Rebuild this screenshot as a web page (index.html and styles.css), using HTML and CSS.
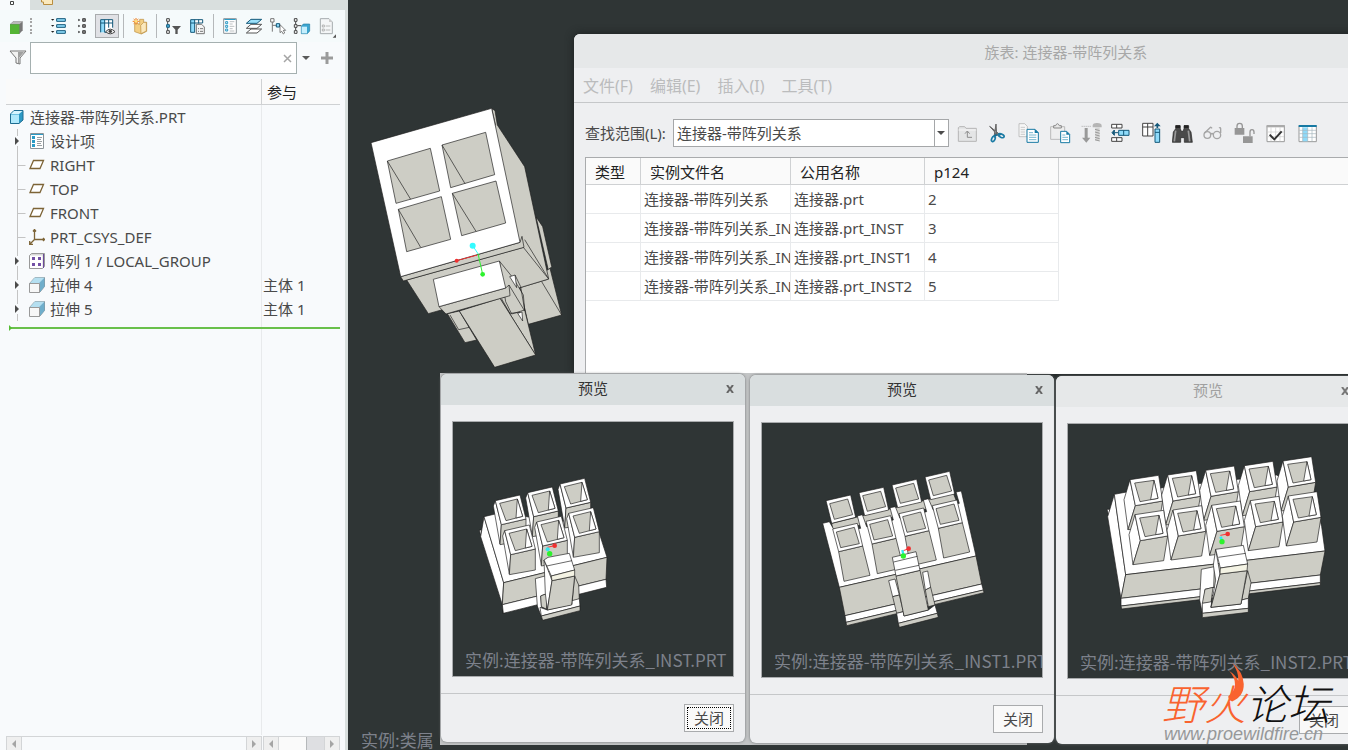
FILE: index.html
```html
<!doctype html>
<html lang="zh-CN">
  <head>
    <meta charset="UTF-8" />
    <meta name="viewport" content="width=device-width, initial-scale=1.0" />
    <title>族表: 连接器-带阵列关系</title>
    <link rel="stylesheet" href="styles.css">
  </head>
  <body>
    <svg class="defs" aria-hidden="true">
      <defs>
        <symbol id="twig-arrow" viewBox="0 0 21 24">
          <path d="M9.500 0v7M9.500 17v7" stroke="#c4c4c4" />
          <path d="M7 8l4 4-4 4z" fill="#4c4c4c" />
        </symbol>
        <symbol id="twig-branch" viewBox="0 0 21 24">
          <path d="M9.500 0v24M9.500 12.500h8" stroke="#c4c4c4" fill="none" />
        </symbol>
        <symbol id="icon-plane" viewBox="0 0 16 16">
          <path d="M4.500 3.500h10l-3.500 8h-10z" fill="#fff" stroke="#7d6437" stroke-width="1.300" />
        </symbol>
        <symbol id="icon-extrude" viewBox="0 0 16 16">
          <path d="M.5 6.500L6 .5h9.500v9l-5 6z" fill="#8ec5de" stroke="#8a9297" />
          <path d="M6 .5L1 6h9l5.500-5.500z" fill="#b5dff0" />
          <path d="M10.500 6v9.500l5-6V1z" fill="#6faecb" />
          <path d="M.5 6.500h10v9H.5z" fill="#f7f7f7" stroke="#999" />
        </symbol>
        <symbol id="icon-items" viewBox="0 0 16 16">
          <path d="M1.500.5h13v15h-13z" fill="#fff" stroke="#8c9499" />
          <path d="M2 1h12v1H2z" fill="#2b9bc6" />
          <path d="M3 3h3v3H3zM3 7h3v3H3zM3 11h3v3H3z" fill="#2b9bc6" />
          <path d="M8 4.500h5M8 6.500h4M8 8.500h5M8 10.500h4M8 12.500h5" stroke="#9ba0a3" />
        </symbol>
        <g id="tower-3">
          <path class="white" d="M0 0L-6 16 14 130 18 72z" />
          <path class="face" d="M18 72L92 55V118L14 132z" />
          <path class="white" d="M0 0L74-17 92 55 18 72z" />
          <path class="face" d="M13 8L66-5 82 47 32 60z" />
          <path class="white" d="M66-5L82 47 62 52z" />
        </g>
        <g id="tower-4">
          <path class="face" d="M18 68L90 51 112 139 34 157z" />
          <path class="white" d="M0 0L74-17 90 51 18 68z" />
          <path class="face" d="M11 9L65-5 80 44 24 56z" />
        </g>
        <g id="tower-5">
          <path class="white" d="M0 0L-18 60-6 150 16 78z" />
          <path class="face" d="M16 78L98 64 86 138-6 150z" />
          <path class="white" d="M0 0L86-13 98 64 16 78z" />
          <path class="face" d="M14 10L72 2 84 56 30 66z" />
          <path class="white" d="M72 2L84 56 62 60z" />
        </g>
      </defs>
    </svg>

    <div class="app">
      <aside class="sidebar">
        <div class="tabs">
          <button class="tab active" aria-label="模型树">
            <svg viewBox="0 0 30 10" width="30" height="10"><path d="M10.500 1.500h3v3h-3z" fill="#fff" stroke="#444" /></svg>
          </button>
          <button class="tab" aria-label="文件夹">
            <svg viewBox="0 0 30 10" width="30" height="10"><path d="M11.500 0v2h2v2.500h9V0" fill="#fbe9bd" stroke="#b98d3e" /></svg>
          </button>
        </div>

        <div class="tree-toolbar">
          <button class="tool" aria-label="模型">
            <svg viewBox="12 42 72 72"><path d="M30 73l10-9h28v27l-10 11H30z" fill="#777" /><path d="M31 72l10-8h27l-9 8z" fill="#b9b9b9" /><path d="M30 73h28v29H30z" fill="#54b435" /></svg>
          </button>
          <span class="grip"></span>
          <button class="tool" aria-label="全部展开">
            <svg viewBox="144 42 72 72"><path d="M173 56h26v8h-26zM173 74h26v8h-26zM173 92h26v8h-26z" fill="#8fdbfa" stroke="#14587a" stroke-width="3" /><path d="M156 57h10l-5 5zM156 75h10l-5 5zM156 93h10l-5 5z" fill="#222" /></svg>
          </button>
          <button class="tool" aria-label="全部折叠">
            <svg viewBox="213 42 72 72"><path d="M248 56h8v8h-8zM248 74h8v8h-8zM248 92h8v8h-8z" fill="#888" stroke="#444" stroke-width="3" /><path d="M235 56l6 4-6 4zM235 74l6 4-6 4zM235 92l6 4-6 4z" fill="#222" /></svg>
          </button>
          <button class="tool pressed" aria-label="树列">
            <svg viewBox="285 42 72 72"><path d="M302 59h36v38h-36z" fill="#fff" /><path d="M302 59h12v38h-12z" fill="#8fdbfa" /><path d="M302 97V59h36v24M302 69h36M314 59v38h10M326 59v24" fill="none" stroke="#14587a" stroke-width="3" /><path d="M317 95q14-15 28 0q-14 13-28 0z" fill="#eee" stroke="#444" stroke-width="3" /><circle cx="331" cy="94" r="5" fill="#444" /></svg>
          </button>
          <span class="sep"></span>
          <button class="tool" aria-label="显示">
            <svg viewBox="382 42 72 72"><path d="M402 68l15 5V58h12v9h9v27l-16 8-20-7z" fill="#f3cf83" stroke="#b98d3e" stroke-width="2" /><path d="M420 76l9-9h8v26l-16 8z" fill="#fbe9bd" stroke="#b98d3e" stroke-width="2" /><path d="M406 54v20M396 64h20M399 57l14 14M413 57l-14 14" stroke="#f07d1a" stroke-width="3" /><circle cx="406" cy="64" r="4" fill="#ffe680" /></svg>
          </button>
          <span class="sep"></span>
          <button class="tool" aria-label="过滤">
            <svg viewBox="483 42 72 72"><path d="M503 65v8M503 83v8" stroke="#444" stroke-width="3" /><path d="M500 56h8v8h-8zM500 92h8v8h-8z" fill="#fff" stroke="#444" stroke-width="3" /><path d="M500 74h8v8h-8z" fill="#4ab5e0" stroke="#14587a" stroke-width="3" /><path d="M516 78h27l-10 11v13h-7V89z" fill="#555" /></svg>
          </button>
          <button class="tool" aria-label="列设置">
            <svg viewBox="555 42 72 72"><path d="M572 59h36v38h-36z" fill="#fff" /><path d="M572 59h12v38h-12z" fill="#8fdbfa" /><path d="M572 97V59h36v10M572 69h36M584 59v38M596 59v12M572 97h12" fill="none" stroke="#14587a" stroke-width="3" /><path d="M589 73h16l8 8v20h-24z" fill="#f5f5f5" stroke="#777" stroke-width="3" /><path d="M594 86h3M600 86h9M594 94h3M600 94h9" stroke="#777" stroke-width="3" /></svg>
          </button>
          <span class="sep"></span>
          <button class="tool" aria-label="设计项">
            <svg viewBox="654 42 72 72"><path d="M671 56h38v44h-38z" fill="#fff" stroke="#8c9499" stroke-width="3" /><path d="M673 57h34v3h-34z" fill="#2b9bc6" /><path d="M677 65h6v6h-6zM677 76h6v6h-6zM677 87h6v6h-6z" fill="#fff" stroke="#2b9bc6" stroke-width="3" /><path d="M689 65h14M689 72h9M689 79h14M689 86h9M689 93h14" stroke="#9ba0a3" stroke-width="2" /></svg>
          </button>
          <button class="tool" aria-label="层">
            <svg viewBox="726 42 72 72"><path d="M739 99l14-12h32l-14 12zM739 85l14-12h32l-14 12z" fill="#fff" stroke="#555" stroke-width="3" /><path d="M739 70l14-12h32l-14 12z" fill="#9be0fa" stroke="#14587a" stroke-width="3" /></svg>
          </button>
          <button class="tool" aria-label="选择">
            <svg viewBox="798 42 72 72"><path d="M817 66v29M817 76h14" stroke="#777" stroke-width="3" /><path d="M812 56h10v10h-10z" fill="#fff" stroke="#777" stroke-width="3" /><path d="M829 71h10v10h-10z" fill="#8fdbfa" stroke="#14587a" stroke-width="3" /><path d="M840 74v24l5-4 5 8 4-3-4-8h7z" fill="#fff" stroke="#444" stroke-width="2" /></svg>
          </button>
          <button class="tool" aria-label="零件">
            <svg viewBox="870 42 72 72"><path d="M887 65v8M887 83v8M892 77h12" stroke="#444" stroke-width="3" /><path d="M883 56h8v8h-8zM883 74h8v8h-8zM883 92h8v8h-8z" fill="#fff" stroke="#444" stroke-width="3" /><path d="M904 79l6-7h19v21l-7 8h-18z" fill="#3aa5d0" stroke="#277fa5" stroke-width="2" /><path d="M905 80h16v20h-16z" fill="#c5effd" /></svg>
          </button>
          <button class="tool" aria-label="报告">
            <svg viewBox="945 42 72 72"><path d="M964 56h26l10 10v35h-36z" fill="#f4f6f7" stroke="#a5abae" stroke-width="3" /><path d="M990 56v10h10z" fill="#ccc" /><path d="M970 75h6v6h-6zM970 87h6v6h-6z" fill="none" stroke="#9a9a9a" stroke-width="2" /><path d="M980 78h14M980 90h14" stroke="#9a9a9a" stroke-width="2" /><path d="M1011 103v10h-10z" fill="#555" /></svg>
          </button>
        </div>

        <div class="search-row">
          <svg class="funnel" viewBox="0 0 18 18"><path d="M1 2h16l-6 7v6l-4-1V9z" fill="#f2f2f2" stroke="#777" /><path d="M9 3h6l-5 6v5H9z" fill="#a0a0a0" /></svg>
          <div class="search-box">
            <input type="text" aria-label="搜索">
            <button aria-label="清除"><svg viewBox="0 0 9 9" width="9" height="9"><path d="M1 1l7 7M8 1L1 8" stroke="#a5a5a5" stroke-width="1.500" /></svg></button>
          </div>
          <button class="plain" aria-label="选项"><svg viewBox="0 0 8 5" width="8" height="5"><path d="M0 0h8L4 4z" fill="#5a5a5a" /></svg></button>
          <button class="plain add" aria-label="添加"><svg viewBox="0 0 12 12" width="12" height="12"><path d="M6 0v12M0 6h12" stroke="#9b9b9b" stroke-width="3" /></svg></button>
        </div>

        <div class="tree">
          <table>
            <thead>
              <tr><th></th><th>参与</th></tr>
            </thead>
            <tbody>
              <tr>
                <td><div class="node root">
                  <svg class="icon" viewBox="0 0 16 16"><path d="M1.500 5L5 1.500h9V11l-4 3.500H1.500z" fill="#2e9ac5" stroke="#1d6c91" /><path d="M2 5.500h8V14H2z" fill="#b0e9fc" /><path d="M2 5l3-3h8.500L10 5z" fill="#d6f5ff" /></svg>连接器-带阵列关系.PRT</div></td>
                <td></td>
              </tr>
              <tr>
                <td><div class="node"><svg class="twig"><use href="#twig-arrow" /></svg><svg class="icon"><use href="#icon-items" /></svg>设计项</div></td>
                <td></td>
              </tr>
              <tr>
                <td><div class="node"><svg class="twig"><use href="#twig-branch" /></svg><svg class="icon"><use href="#icon-plane" /></svg>RIGHT</div></td>
                <td></td>
              </tr>
              <tr>
                <td><div class="node"><svg class="twig"><use href="#twig-branch" /></svg><svg class="icon"><use href="#icon-plane" /></svg>TOP</div></td>
                <td></td>
              </tr>
              <tr>
                <td><div class="node"><svg class="twig"><use href="#twig-branch" /></svg><svg class="icon"><use href="#icon-plane" /></svg>FRONT</div></td>
                <td></td>
              </tr>
              <tr>
                <td><div class="node"><svg class="twig"><use href="#twig-branch" /></svg><svg class="icon" viewBox="0 0 16 16"><path d="M5.500 0v10.500H16M5.500 10.500L1 15M4 2.500L5.500.5 7 2.500M14 9l1.500 1.500L14 12M.7 12v3.300H4" fill="none" stroke="#7d6437" stroke-width="1.300" /></svg>PRT_CSYS_DEF</div></td>
                <td></td>
              </tr>
              <tr>
                <td><div class="node"><svg class="twig"><use href="#twig-arrow" /></svg><svg class="icon" viewBox="0 0 16 16"><path d="M.5 2.500l2-2h13v13l-2 2H.5z" fill="#d8d8d8" stroke="#999" /><path d="M1 2.500h12.500V15H1z" fill="#fff" /><path d="M14.500 1v14" stroke="#6c4a9b" /><path d="M3 4h3v3H3zM9 4h3v3H9zM3 10h3v3H3zM9 10h3v3H9z" fill="#7350a5" /></svg>阵列 1 / LOCAL_GROUP</div></td>
                <td></td>
              </tr>
              <tr>
                <td><div class="node"><svg class="twig"><use href="#twig-arrow" /></svg><svg class="icon"><use href="#icon-extrude" /></svg>拉伸 4</div></td>
                <td>主体 1</td>
              </tr>
              <tr>
                <td><div class="node"><svg class="twig"><use href="#twig-arrow" /></svg><svg class="icon"><use href="#icon-extrude" /></svg>拉伸 5</div></td>
                <td>主体 1</td>
              </tr>
            </tbody>
          </table>
          <div class="insert-line"></div>
        </div>

        <div class="scrollbars">
          <div class="scrollbar wide">
            <button aria-label="向左"><svg viewBox="0 0 4 8"><path d="M4 0v8L0 4z" /></svg></button>
            <span class="track"></span>
            <button aria-label="向右"><svg viewBox="0 0 4 8"><path d="M0 0v8l4-4z" /></svg></button>
          </div>
          <div class="scrollbar narrow">
            <button aria-label="向左"><svg viewBox="0 0 4 8"><path d="M4 0v8L0 4z" /></svg></button>
            <span class="track"><span class="thumb"></span></span>
            <button aria-label="向右"><svg viewBox="0 0 4 8"><path d="M0 0v8l4-4z" /></svg></button>
          </div>
        </div>
      </aside>

      <main class="viewport">
        <svg class="model main-model" viewBox="0 0 660 855">
          <path class="face" d="M528 365L548 395 575 515 565 525z" />
          <path class="face" d="M480 578L570 520 605 660 505 688z" />
          <path class="edge" d="M545 560L605 660" />
          <path class="face" d="M395 40L405 47 412 90 494 215 566 552 480 578 450 450z" />
          <path class="edge" d="M395 40L407 92 M494 434L566 552" />
          <path class="face" d="M140 555L490 457 566 552 480 578 205 656z" />
          <path class="face" d="M122 545L480 442 486 424 492 457 130 558z" />
          <path class="white" d="M33 143L395 40 480 442 122 545z" />
          <path class="face" d="M82 198L211 160 239 288 108 325zM246 150L377 112 404 239 272 278zM115 343L244 305 272 433 140 470zM277 295L408 258 437 384 305 422z" />
          <path class="edge" d="M82 198L152 313M246 150L315 266M115 343L182 457M277 295L348 409" />
          <path class="face" d="M262 656L298 648 350 735 315 743z" />
          <path class="edge" d="M270 660L296 704 328 697" />
          <path class="face" d="M420 610L450 602 494 645 527 780z" />
          <path class="face" d="M298 648L420 610 527 780 404 817z" />
          <path class="face" d="M418 498L460 550 490 600 494 645 455 657 437 620z" />
          <path class="white" d="M449 545L465 540 470 578zM473 655L486 651 488 678z" />
          <path class="edge" d="M465 540L482 575 494 645M425 612L450 655 480 652M447 570L494 648" />
          <path class="face" d="M237 635L437 579 447 570 450 602 258 657z" />
          <path class="white" d="M220 553L418 498 437 579 237 635z" />
          <path d="M290 497L352 480" stroke="#e33" stroke-width="3" />
          <path d="M338 452L354 476" stroke="#3ff" stroke-width="3" />
          <path d="M354 476L368 538" stroke="#3e3" stroke-width="3" />
          <circle cx="290" cy="497" r="6" fill="#f03030" />
          <circle cx="338" cy="452" r="9" fill="#33fbff" />
          <circle cx="368" cy="538" r="7" fill="#2df22d" />
        </svg>
        <span class="model-label">实例:类属</span>

        <section class="window family-table">
          <header class="window-title">族表: 连接器-带阵列关系</header>
          <nav class="menubar">
            <button disabled>文件(F)</button>
            <button disabled>编辑(E)</button>
            <button disabled>插入(I)</button>
            <button disabled>工具(T)</button>
          </nav>
          <div class="lookup">
            <label for="look-in">查找范围(L):</label>
            <div class="combo">
              <select id="look-in"><option>连接器-带阵列关系</option></select>
            </div>
            <div class="lookup-tools">
              <button aria-label="上一级"><svg viewBox="22 63 72 72"><path d="M32 124V83l4-3h15l4 5h31v39z" fill="#e4e5e6" stroke="#b5b5b5" stroke-width="3" /><path d="M32 90h54" stroke="#fff" stroke-width="2" /><path d="M59 94v18h14M52 101l7-8 7 8" fill="none" stroke="#8d8d8d" stroke-width="3" /></svg></button>
              <button aria-label="剪切"><svg viewBox="112 63 72 72"><path d="M123 79l26 29 5-4zM142 72l2 33-8 6z" fill="#777" stroke="#666" stroke-width="3" /><path d="M144 104l-9 6M147 105l11-3" stroke="#176b91" stroke-width="6" /><ellipse cx="134" cy="117" rx="5" ry="8" transform="rotate(25 134 117)" fill="none" stroke="#1b7ba5" stroke-width="5" /><ellipse cx="158" cy="107" rx="9" ry="5" transform="rotate(25 158 107)" fill="none" stroke="#1b7ba5" stroke-width="5" /></svg></button>
              <button aria-label="复制"><svg viewBox="205 63 72 72"><path d="M211 71h17l8 8v31h-25z" fill="#f7f7f7" stroke="#ababab" stroke-width="2" /><path d="M216 82h13M216 89h13M216 96h13M216 103h13" stroke="#b5b5b5" stroke-width="2" /><path d="M235 88h24l10 10v29h-34z" fill="#fff" stroke="#1679a3" stroke-width="3" /><path d="M258 87v12h12z" fill="#1679a3" /><path d="M241 98h12M241 105h22M241 112h22M241 119h22" stroke="#3192b7" stroke-width="2" /></svg></button>
              <button aria-label="粘贴"><svg viewBox="300 63 72 72"><path d="M308 80h42v38h-42z" fill="#eee" stroke="#bbb" stroke-width="3" /><path d="M317 84v-7h6q5-12 11 0h6v7z" fill="#e8e8e8" stroke="#888" stroke-width="3" /><path d="M338 94h18l9 9v25h-27z" fill="#fff" stroke="#1679a3" stroke-width="3" /><path d="M355 93v11h11z" fill="#1679a3" /><path d="M343 105h9M343 112h17M343 119h17" stroke="#3192b7" stroke-width="2" /></svg></button>
              <button aria-label="排序"><svg viewBox="394 63 72 72"><path d="M402 79h30" stroke="#aaa" stroke-width="3" stroke-dasharray="3 3" /><path d="M411 84h9v29h8l-12 15-13-15h8z" fill="#999" /><path d="M435 76q2-8 14-7q13 0 13 8v5h-27z" fill="#b5b5b5" /><path d="M443 82h13v41h-13z" fill="#d5d5d5" /><path d="M442 88l14 4M442 96l14 4M442 104l14 4M442 112l14 4M442 119l14 4" stroke="#999" stroke-width="3" /></svg></button>
              <button aria-label="插入行"><svg viewBox="485 63 72 72"><path d="M490 73h31v11h-31zM505 73v11M490 113h31v11h-31zM505 113v11" fill="#fff" stroke="#444" stroke-width="3" /><path d="M511 91h31v15h-31zM526 91v15" fill="#8fdbfa" stroke="#14587a" stroke-width="3" /><path d="M509 98h-11v8l-7-8 7-8v8" fill="#14587a" stroke="#14587a" stroke-width="3" /></svg></button>
              <button aria-label="插入列"><svg viewBox="578 63 72 72"><path d="M583 70h31v38h-31zM598 70v38M583 81h31" fill="#fff" stroke="#444" stroke-width="3" /><path d="M620 87h14v40h-14zM620 97h14" fill="#8fdbfa" stroke="#14587a" stroke-width="3" /><path d="M627 84v-7" stroke="#14587a" stroke-width="5" /><path d="M617 79l10-11 10 11z" fill="#14587a" /></svg></button>
              <button aria-label="查找"><svg viewBox="671 63 72 72"><path d="M672 127l3-31 7-10v-9h14v9l3 8h5l3-8v-9h14v9l7 10 4 31h-24v-14h-11v14z" fill="#4a4a4a" stroke="#222" stroke-width="2" /><path d="M682 76h13v8h-13zM707 76h13v8h-13z" fill="#222" /><path d="M682 92l-4 32M720 92l4 32" stroke="#999" stroke-width="5" /></svg></button>
              <button aria-label="预览"><svg viewBox="764 63 72 72"><g fill="none" stroke="#a5a5a5" stroke-width="4"><circle cx="777" cy="105" r="10" /><circle cx="806" cy="105" r="11" /><path d="M787 103q4-5 8 0M768 100l17-17q3-3 6 2M817 99V86q-1-5-5-2" /></g></svg></button>
              <button aria-label="锁定"><svg viewBox="856 63 72 72"><path d="M858 84h29v20h-29zM883 109h29v20h-29z" fill="#969696" /><path d="M865 84v-6q0-8 8-8t8 8v6M904 109V97q0-8 6-8t6 8v5" fill="none" stroke="#969696" stroke-width="4" /></svg></button>
              <button aria-label="校验"><svg viewBox="949 63 72 72"><path d="M955 77h52v48h-52z" fill="#fff" stroke="#999" stroke-width="3" /><path d="M954 75h54v7h-54z" fill="#aaa" /><path d="M967 82v42M981 82v42M994 82v42M956 96h50M956 110h50" stroke="#ccc" stroke-width="2" /><path d="M963 104l14 14 22-24" fill="none" stroke="#333" stroke-width="6" /></svg></button>
              <button aria-label="编辑表"><svg viewBox="1042 63 72 72"><path d="M1051 77h52v48h-52z" fill="#fff" stroke="#999" stroke-width="3" /><path d="M1062 82h15v42h-15z" fill="#8fdbfa" /><path d="M1062 82v42M1077 82v42M1090 82v42M1052 91h50M1052 101h50M1052 112h50" stroke="#a5b5bd" stroke-width="2" /><path d="M1050 75h54v6h-54z" fill="#1679a3" /></svg></button>
            </div>
          </div>
          <div class="instances">
            <table>
              <colgroup><col class="c-type"><col class="c-file"><col class="c-name"><col class="c-value"><col></colgroup>
              <thead>
                <tr><th>类型</th><th>实例文件名</th><th>公用名称</th><th>p124</th><th></th></tr>
              </thead>
              <tbody>
                <tr><td></td><td>连接器-带阵列关系</td><td>连接器.prt</td><td>2</td></tr>
                <tr><td></td><td>连接器-带阵列关系_INST</td><td>连接器.prt_INST</td><td>3</td></tr>
                <tr><td></td><td>连接器-带阵列关系_INST1</td><td>连接器.prt_INST1</td><td>4</td></tr>
                <tr><td></td><td>连接器-带阵列关系_INST2</td><td>连接器.prt_INST2</td><td>5</td></tr>
              </tbody>
            </table>
          </div>
        </section>

        <div class="backdrop"></div>

        <section class="window preview preview-1">
          <header class="window-title">预览
            <button aria-label="关闭窗口"><svg viewBox="0 0 8 8"><path d="M1 0l6 8M7 0L1 8" stroke="#666" stroke-width="2" /></svg></button>
          </header>
          <div class="canvas">
            <svg class="model" viewBox="0 0 840 765">
              <g transform="translate(51 144)">
                <path class="white" d="M28 180L34 180 34 204z" />
                <path class="white" d="M42 140L32 200 97 404 100 432 97 404 101 338z" />
                <path class="white" d="M42 140L84 130 380 165 411 262 101 338z" />
                <path class="face" d="M101 338L411 262 408 328 97 404z" />
                <path class="white" d="M97 404L408 328 410 352 100 430z" />
                <use href="#tower-3" x="76" y="92" />
                <use href="#tower-3" x="173" y="68" />
                <use href="#tower-3" x="270" y="42" />
                <use href="#tower-3" x="104" y="182" />
                <use href="#tower-3" x="200" y="156" />
                <use href="#tower-3" x="296" y="130" />
                <path class="white" d="M196 326L232 316 232 370 212 378 218 450 202 408z" />
                <path class="face" d="M212 378L232 370 230 418 214 410z" />
                <path class="face" d="M314 318L326 345 328 390 306 402z" />
                <path class="white" d="M210 412L232 420 306 403 306 392 328 386 330 408 214 438z" />
                <path class="face" d="M214 438L330 408 330 422 218 451z" />
                <path class="white" d="M222 270L238 310 246 332 232 420 226 370z" />
                <path class="face" d="M246 332L314 318 305 405 232 420z" />
                <path class="white" d="M222 270L234 262 298 250 314 300 244 318z" />
                <path class="cream" d="M244 318L314 300V318L246 332z" />
                <path class="edge" d="M230 288L306 272" />
                <path d="M232 232L254 227" stroke="#f33" stroke-width="3" />
                <circle cx="233" cy="238" r="6" fill="#33e8ef" />
                <circle cx="254" cy="227" r="7" fill="#f03030" />
                <circle cx="239" cy="251" r="8" fill="#2df22d" />
              </g>
            </svg>
            <span class="caption">实例:连接器-带阵列关系_INST.PRT</span>
          </div>
          <footer><button class="btn focused">关闭</button></footer>
        </section>

        <section class="window preview preview-2">
          <header class="window-title">预览
            <button aria-label="关闭窗口"><svg viewBox="0 0 8 8"><path d="M1 0l6 8M7 0L1 8" stroke="#666" stroke-width="2" /></svg></button>
          </header>
          <div class="canvas">
            <svg class="model" viewBox="0 0 840 765">
              <g transform="translate(144 111)">
                <path class="face" d="M65 190L430 100 440 125 70 215z" />
                <path class="white" d="M38 190L58 185 78 220 152 205 142 168 157 164 170 200 250 180 240 143 256 140 270 175 350 155 340 120 355 116 370 150 448 130 438 96 454 93 498 288 88 382z" />
                <path class="face" d="M88 382L498 288 515 372 105 467z" />
                <path class="white" d="M105 467L515 372 520 390 108 487z" />
                <path class="face" d="M108 487L520 390 522 398 110 497z" />
                <use href="#tower-4" x="68" y="207" />
                <use href="#tower-4" x="168" y="184" />
                <use href="#tower-4" x="267" y="161" />
                <use href="#tower-4" x="367" y="137" />
                <path class="white" d="M48 122L122 105 137 172 65 190zM147 98L221 82 236 150 164 167zM246 75L320 58 335 126 263 143zM345 51L419 34 434 102 362 119z" />
                <path class="face" d="M59 131L113 117 128 164 73 178zM158 107L212 94 227 140 172 154zM257 84L311 70 326 117 271 130zM356 60L410 46 425 93 370 107z" />
                <path class="white" d="M236 362L255 357 268 405 248 410zM338 337L353 333 362 382 346 390z" />
                <path class="face" d="M248 410L268 405 280 455 260 460zM346 390L362 382 375 435 355 440z" />
                <path class="white" d="M260 460L280 455 282 468 355 450 375 435 382 460 265 490z" />
                <path class="face" d="M265 490L382 460 385 472 268 502z" />
                <path class="face" d="M258 348L330 331 355 450 282 468z" />
                <path class="white" d="M247 292L318 275 330 331 258 348z" />
                <path class="edge" d="M251 306L322 289M256 331L327 316" />
                <path d="M280 272L296 266" stroke="#f33" stroke-width="3" />
                <path d="M277 270L280 284" stroke="#33e8ef" stroke-width="7" />
                <circle cx="296" cy="266" r="7" fill="#f03030" />
                <circle cx="280" cy="288" r="8" fill="#2df22d" />
              </g>
            </svg>
            <span class="caption">实例:连接器-带阵列关系_INST1.PRT</span>
          </div>
          <footer><button class="btn">关闭</button></footer>
        </section>

        <section class="window preview preview-3">
          <header class="window-title">预览
            <button aria-label="关闭窗口"><svg viewBox="0 0 8 8"><path d="M1 0l6 8M7 0L1 8" stroke="#777" stroke-width="2" /></svg></button>
          </header>
          <div class="canvas">
            <svg class="model" viewBox="0 0 840 765">
              <g transform="translate(81 78)">
                <path class="white" d="M36 178L44 178 42 200z" />
                <path class="white" d="M58 133L38 200 78 447 92 374z" />
                <path class="white" d="M58 133L100 125 320 100 545 75 660 140 680 230 690 303 92 374z" />
                <path class="face" d="M92 374L690 303 676 375 78 445z" />
                <path class="white" d="M78 445L676 375V398L78 468z" />
                <path class="face" d="M78 468L676 398V406L80 477z" />
                <use href="#tower-5" x="105" y="89" />
                <use href="#tower-5" x="218" y="75" />
                <use href="#tower-5" x="332" y="61" />
                <use href="#tower-5" x="448" y="47" />
                <use href="#tower-5" x="564" y="33" />
                <use href="#tower-5" x="120" y="194" />
                <use href="#tower-5" x="234" y="180" />
                <use href="#tower-5" x="350" y="166" />
                <use href="#tower-5" x="466" y="152" />
                <use href="#tower-5" x="580" y="138" />
                <path class="white" d="M319 358L358 350 356 412 330 418 322 490 314 450z" />
                <path class="face" d="M330 418L354 412 348 458 322 460z" />
                <path class="face" d="M458 362L468 398 460 445 440 450z" />
                <path class="white" d="M322 460L350 455 348 472 438 462 440 450 460 445V475L322 490z" />
                <path class="face" d="M322 490L460 475V487L322 503z" />
                <path class="white" d="M362 298L355 345 362 390 348 472 375 372z" />
                <path class="face" d="M375 372L456 362 438 462 348 472z" />
                <path class="white" d="M362 298L445 286 458 342 376 354z" />
                <path class="cream" d="M376 354L458 342 456 362 375 372z" />
                <path class="edge" d="M370 322L452 310" />
                <path d="M376 256L398 252" stroke="#f33" stroke-width="3" />
                <path d="M377 260L381 274" stroke="#33e8ef" stroke-width="8" />
                <circle cx="398" cy="252" r="7" fill="#f03030" />
                <circle cx="381" cy="275" r="8" fill="#2df22d" />
              </g>
            </svg>
            <span class="caption">实例:连接器-带阵列关系_INST2.PRT</span>
          </div>
          <footer><button class="btn">关闭</button></footer>
        </section>

        <div class="watermark">
          <div class="brand"><span>野火</span>论坛</div>
          <svg class="flame" viewBox="0 0 60 130"><path d="M18 2q34 28 36 66q1 38-36 54q-12-4-12-16q20-16 21-34q1-24-18-44q20 12 28 30q2-28-19-56z" fill="#f9632f" /></svg>
          <div class="site">www.proewildfire.cn</div>
        </div>
      </main>
    </div>
  </body>
</html>
```

FILE: styles.css
```css
* {
  box-sizing: border-box;
}

body {
  margin: 0;
  font-family: "Noto Sans", "Noto Sans CJK SC", sans-serif;
  font-size: 15px;
  line-height: 24px;
  color: #4a4a4a;
}

button,
input,
select {
  font: inherit;
  color: inherit;
}

button {
  padding: 0;
  border: 0;
  background: none;
}

svg {
  display: block;
  flex: none;
}

.defs {
  position: absolute;
  width: 0;
  height: 0;
}

.app {
  display: flex;
  height: 100vh;
  overflow: hidden;
}

/* Model tree panel */
.sidebar {
  display: flex;
  flex-direction: column;
  flex: none;
  width: 348px;
  background-color: #f8fafc;
  border-right: 3px solid #d9dfde;
}

.tabs {
  display: flex;
  flex: none;
  height: 10px;
  background-color: #d9dfde;
}

.tab {
  width: 30px;
  height: 10px;
}

.tab.active {
  background-color: #f8fafc;
}

.tree-toolbar {
  display: flex;
  align-items: center;
  height: 32px;
  padding-left: 4px;
  background-color: #f5fafb;
}

.tool {
  width: 24px;
  height: 24px;
}

.tool svg {
  width: 24px;
  height: 24px;
}

.tool.pressed {
  background-color: #e0e1e5;
  outline: 1px solid #a9acae;
  outline-offset: -1px;
}

.grip {
  width: 19px;
  height: 16px;
}

.grip::before {
  content: "";
  display: block;
  height: 16px;
  margin-left: 2px;
  border-left: 2px dotted #a5a5a5;
}

.sep {
  width: 1px;
  height: 24px;
  margin: 0 4px;
  background-color: #b5b8ba;
}

.search-row {
  display: flex;
  align-items: center;
  height: 32px;
  padding-left: 9px;
}

.funnel {
  width: 18px;
  height: 18px;
  margin-right: 3px;
}

.search-box {
  display: flex;
  align-items: center;
  width: 267px;
  height: 32px;
  padding-right: 4px;
  background-color: #fff;
  border: 1px solid #a5b0b0;
}

.search-box input {
  flex: 1;
  min-width: 0;
  border: 0;
  outline: 0;
  background: none;
}

.plain {
  margin-left: 5px;
}

.plain.add {
  margin-left: 11px;
}

.tree {
  flex: 1;
  margin: 5px 5px 1px 6px;
  background: linear-gradient(#e8eaec, #e8eaec) 255px 0 / 1px 100% no-repeat;
}

.tree table {
  width: 100%;
  table-layout: fixed;
  border-collapse: separate;
  border-spacing: 0;
}

.tree th {
  height: 26px;
  padding: 1px 0 0 5px;
  font-weight: normal;
  text-align: left;
  color: #222;
  background-color: #fafafa;
  border-bottom: 1px solid #cfd1d3;
}

.tree th:first-child {
  width: 256px;
  border-right: 1px solid #cfd1d3;
}

.tree td {
  height: 24px;
  padding: 0 0 0 1px;
}

.node {
  display: flex;
  align-items: center;
  height: 24px;
  padding-left: 1px;
}

.node .icon {
  width: 16px;
  height: 16px;
  margin-right: 5px;
}

.node.root {
  padding-left: 2px;
}

.node .twig {
  width: 21px;
  height: 24px;
}

.insert-line {
  height: 2px;
  margin: 6px 0 0 3px;
  background-color: #69c04b;
  position: relative;
}

.insert-line::before {
  content: "";
  position: absolute;
  top: -2px;
  left: 0;
  border: 3px solid transparent;
  border-left-color: #55bd33;
}

.scrollbars {
  display: flex;
  flex: none;
  gap: 1px;
  height: 14px;
  padding: 0 5px 0 6px;
}

.scrollbar {
  display: flex;
  height: 14px;
  border: 1px solid #d3d5d7;
  border-bottom: 0;
}

.scrollbar.wide {
  width: 256px;
}

.scrollbar.narrow {
  flex: 1;
}

.scrollbar button {
  display: flex;
  align-items: center;
  justify-content: center;
  width: 14px;
  background-color: #efefef;
}

.scrollbar button svg {
  width: 4px;
  height: 8px;
  fill: #a5a5a5;
}

.track {
  flex: 1;
  border: solid #d3d5d7;
  border-width: 0 1px;
}

.narrow .track {
  background-color: #dedfe2;
}

.thumb {
  display: block;
  width: 28px;
  height: 14px;
  background-color: #fafafa;
  border-right: 1px solid #b5b8ba;
}

/* Graphics area */
.viewport {
  position: relative;
  flex: 1;
  min-width: 0;
  overflow: hidden;
  background-color: #2f3535;
}

.white,
.face,
.cream,
.edge {
  stroke: #1c1c1c;
  stroke-width: 2;
  stroke-linejoin: round;
}

.white {
  fill: #fff;
}

.face {
  fill: #cdcdc5;
}

.cream {
  fill: #f4f3e4;
}

.edge {
  fill: none;
}

.main-model {
  position: absolute;
  top: 95px;
  left: 12px;
  width: 220px;
  height: 285px;
}

.model-label,
.caption {
  position: absolute;
  font-family: "Noto Sans CJK SC", sans-serif;
  font-size: 17px;
  line-height: 20px;
  white-space: nowrap;
  color: #7d818b;
}

.model-label {
  left: 13px;
  bottom: 0;
}

/* Windows */
.window {
  position: absolute;
  background-color: #eeeff1;
  border-radius: 6px;
}

.window-title {
  position: relative;
  text-align: center;
}

.family-table {
  top: 34px;
  left: 226px;
  display: flex;
  flex-direction: column;
  width: 984px;
  height: 340px;
  border-radius: 6px 6px 0 0;
  box-shadow: 0 0 8px #1c1f1f;
}

.family-table .window-title {
  padding: 6px 0 4px;
  background-color: #e6e8e9;
  border-radius: 6px 6px 0 0;
  color: #a8a8a8;
}

.menubar {
  display: flex;
  gap: 17px;
  padding: 6px 9px 4px;
  border-bottom: 1px solid #c5c7c9;
}

.menubar button {
  font-size: 16px;
  color: #bbbcbd;
}

.lookup {
  display: flex;
  align-items: center;
  height: 54px;
  padding: 6px 11px 0;
}

.lookup label {
  width: 88px;
  white-space: nowrap;
}

.combo {
  position: relative;
  width: 276px;
  height: 28px;
}

.combo select {
  width: 100%;
  height: 100%;
  padding: 0 20px 0 3px;
  appearance: none;
  background-color: #fff;
  border: 1px solid #a5a7a9;
  border-radius: 0;
}

.combo::before {
  content: "";
  position: absolute;
  top: 1px;
  right: 14px;
  height: 26px;
  border-left: 1px solid #a5a7a9;
}

.combo::after {
  content: "";
  position: absolute;
  top: 12px;
  right: 4px;
  border: 4px solid transparent;
  border-top-color: #4c4c4c;
  border-bottom: 0;
}

.lookup-tools {
  display: flex;
  margin-left: 2px;
}

.lookup-tools button {
  display: flex;
  justify-content: center;
  width: 31px;
}

.lookup-tools svg {
  width: 24px;
  height: 24px;
}

.instances {
  flex: 1;
  margin: 0 11px;
  background-color: #fff;
  border: 1px solid #a9abad;
  border-bottom: 0;
}

.instances table {
  width: 100%;
  table-layout: fixed;
  border-collapse: separate;
  border-spacing: 0;
}

.c-type {
  width: 55px;
}

.c-file {
  width: 150px;
}

.c-name,
.c-value {
  width: 134px;
}

.instances th {
  height: 27px;
  padding: 3px 0 0 9px;
  line-height: 23px;
  font-weight: normal;
  text-align: left;
  color: #222;
  background-color: #fafafa;
  border-right: 1px solid #cfd1d3;
  border-bottom: 1px solid #cfd1d3;
}

.instances td {
  height: 29px;
  padding: 0 1px 0 3px;
  line-height: 28px;
  overflow: hidden;
  white-space: nowrap;
  border-right: 1px solid #e8eaec;
  border-bottom: 1px solid #e8eaec;
}

.backdrop {
  position: absolute;
  top: 373px;
  left: 92px;
  width: 587px;
  height: 372px;
  background-color: #c3c5c6;
}

.preview {
  width: 304px;
  box-shadow: 0 0 3px #6c7071;
}

.preview-1 {
  top: 374px;
  left: 93px;
}

.preview-2 {
  top: 375px;
  left: 402px;
}

.preview-3 {
  top: 376px;
  left: 708px;
}

.preview .window-title {
  padding: 2px 0 5px;
  color: #333;
  background-color: #d9dedf;
  border-radius: 6px 6px 0 0;
}

.preview-3 .window-title {
  color: #a0a0a0;
  background-color: #e6e8e9;
}

.window-title button {
  position: absolute;
  top: 11px;
  right: 11px;
}

.window-title svg {
  width: 8px;
  height: 8px;
}

.canvas {
  position: relative;
  height: 256px;
  margin: 16px 11px;
  overflow: hidden;
  background-color: #2f3535;
  border: 1px solid #a9abad;
}

.canvas .model {
  width: 280px;
  height: 255px;
}

.caption {
  left: 12px;
  bottom: 6px;
}

.preview footer {
  display: flex;
  justify-content: flex-end;
  padding: 10px 11px;
  border-top: 1px solid #c5c7c9;
}

.btn {
  width: 50px;
  height: 28px;
  background-color: #f9f9f9;
  border: 1px solid #a9abad;
}

.btn.focused {
  outline: 1px dotted #000;
  outline-offset: -4px;
}

/* Forum mark in the corner */
.watermark {
  position: absolute;
  right: 18px;
  bottom: 6px;
  width: 168px;
}

.brand {
  font-family: "Noto Sans CJK SC", sans-serif;
  font-size: 42px;
  font-style: italic;
  font-weight: 300;
  line-height: 44px;
  white-space: nowrap;
  color: #111;
}

.brand span {
  color: #f9632f;
}

.flame {
  position: absolute;
  top: -18px;
  left: 64px;
  width: 20px;
  height: 42px;
}

.site {
  padding-left: 2px;
  font-family: "Liberation Sans", Arial, sans-serif;
  font-size: 18px;
  font-style: italic;
  line-height: 20px;
  color: #969899;
}
```
